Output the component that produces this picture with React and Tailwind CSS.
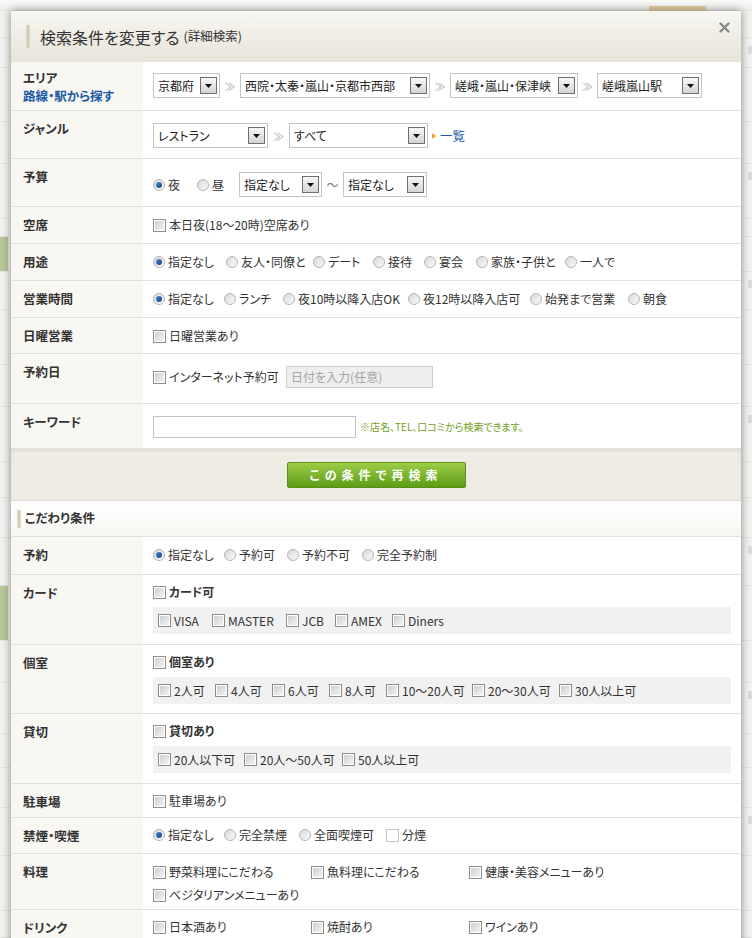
import React from "react";

const FONT = "font-[family-name:'Noto_Sans_CJK_JP','Noto_Sans',sans-serif] [font-feature-settings:'palt']";

function Radio({ on }) {
  return (
    <span className="flex h-[12px] w-[12px] shrink-0 items-center justify-center rounded-full border border-[#b4b4b4] bg-gradient-to-br from-[#d9d9d9] to-[#fbfbfb]">
      {on && <span className="h-[6px] w-[6px] rounded-full bg-gradient-to-br from-[#4f8fd6] to-[#0f3f7e]" />}
    </span>
  );
}

function Cb({ light }) {
  return light ? (
    <span className="h-[13px] w-[13px] shrink-0 border border-[#c4c4c4] bg-white" />
  ) : (
    <span className="flex h-[13px] w-[13px] shrink-0 items-center justify-center border border-[#8d8d8d] bg-white">
      <span className="h-[9px] w-[9px] bg-gradient-to-br from-[#cfcfcf] to-[#f4f4f4]" />
    </span>
  );
}

function RadioItem({ on, w, children }) {
  return (
    <span className={`flex shrink-0 items-center ${w || ""}`}>
      <Radio on={on} />
      <span className="ml-[3px] whitespace-nowrap">{children}</span>
    </span>
  );
}

function CbItem({ w, bold, light, children }) {
  return (
    <span className={`flex shrink-0 items-center ${w || ""}`}>
      <Cb light={light} />
      <span className={`ml-[3px] whitespace-nowrap ${bold ? "font-bold" : ""}`}>{children}</span>
    </span>
  );
}

function Select({ w, children }) {
  return (
    <div className={`flex h-[25px] shrink-0 items-center justify-between border border-[#c4c4c4] bg-white pl-[4px] pr-[2px] text-[12px] text-[#222] ${w}`}>
      <span className="whitespace-nowrap leading-none">{children}</span>
      <span className="flex h-[17px] w-[17px] shrink-0 items-center justify-center border border-[#6f6f6f] bg-gradient-to-b from-[#f7f7f7] to-[#d4d4d4]">
        <svg width="7" height="4" viewBox="0 0 7 4">
          <path d="M0 0h7L3.5 4z" fill="#111" />
        </svg>
      </span>
    </div>
  );
}

function Sep({ w }) {
  return <span className={`shrink-0 text-center text-[11px] text-[#a8a8a8] ${w || "w-[20px]"}`}>≫</span>;
}

function Row({ label, children, cls, lcls }) {
  return (
    <div className="flex border-b border-[#e4e1d5]">
      <div className={`w-[132px] shrink-0 bg-[#f8f7f2] pl-[12px] text-[12.5px] font-bold leading-[16px] text-[#333] ${lcls || "pt-[10px]"}`}>
        {label}
      </div>
      <div className={`min-w-0 flex-1 pl-[10px] pr-[10px] leading-[18px] ${cls}`}>{children}</div>
    </div>
  );
}

function Background() {
  const rows = [30, 32, 60, 46, 60, 20, 38, 42, 60, 46, 60, 40, 44, 52, 60, 46, 56, 38, 44, 52, 60, 30];
  return (
    <div className="flex h-full w-full flex-col">
      <div className="flex h-[11px] border-b border-[#e3e3e0] bg-gradient-to-b from-[#fbfbfa] to-[#efefed]">
        <div className="ml-[649px] mt-[6px] h-[5px] w-[57px] bg-[#e6cf9f]" />
      </div>
      {rows.map((h, i) => (
        <div key={i} className="flex justify-between border-b border-[#e4e4e1]" style={{ height: h }}>
          <div className={`w-[8px] ${i === 6 || i === 14 ? "bg-[#b9c897]" : ""}`} />
          <div className={`mt-[8px] h-[8px] w-[4px] ${i % 3 === 1 ? "bg-[#dcdcda]" : ""}`} />
        </div>
      ))}
    </div>
  );
}

export default function App() {
  return (
    <div className={`relative h-[938px] w-[752px] overflow-hidden bg-[#f3f3f1] text-[12px] text-[#333] ${FONT}`}>
      <Background />
      <div className="absolute left-[11px] top-[11px] w-[730px] bg-white shadow-[0_0_9px_rgba(0,0,0,0.45)]">
        {/* header */}
        <div className="flex h-[51px] items-center bg-gradient-to-b from-[#f7f6f1] to-[#e7e4d9]">
          <span className="ml-[15px] h-[23px] w-[4px] bg-gradient-to-r from-[#e2dccb] via-[#cfc7b0] to-[#e2dccb]" />
          <span className="ml-[10px] text-[16px] leading-none text-[#333]">検索条件を変更する</span>
          <span className="ml-[4px] text-[12.5px] leading-none text-[#333]">(詳細検索)</span>
          <span className="ml-auto mr-[11px] self-start pt-[11px]">
            <svg width="11" height="11" viewBox="0 0 11 11">
              <path d="M1.5 1.5l8 8M9.5 1.5l-8 8" stroke="#8a8a8a" strokeWidth="2.4" strokeLinecap="round" />
            </svg>
          </span>
        </div>

        <Row
          lcls="pt-[7px]"
          label={
            <div className="flex flex-col">
              <span className="leading-[18px]">エリア</span>
              <span className="leading-[18px] text-[#1b5aa6]">路線・駅から探す</span>
            </div>
          }
          cls="flex items-center pt-[11px] pb-[12px]"
        >
          <Select w="w-[67px]">京都府</Select>
          <Sep />
          <Select w="w-[190px]">西院・太秦・嵐山・京都市西部</Select>
          <Sep />
          <Select w="w-[128px]">嵯峨・嵐山・保津峡</Select>
          <Sep w="w-[19px]" />
          <Select w="w-[105px]">嵯峨嵐山駅</Select>
        </Row>

        <Row label="ジャンル" cls="flex items-center pt-[12px] pb-[10px]">
          <Select w="w-[115px]">レストラン</Select>
          <Sep w="w-[21px]" />
          <Select w="w-[139px]">すべて</Select>
          <span className="ml-[4px] flex items-center">
            <svg width="4" height="6" viewBox="0 0 4 6">
              <path d="M0 0l4 3-4 3z" fill="#eea13a" />
            </svg>
            <span className="ml-[4px] text-[12.5px] text-[#1b5aa6]">一覧</span>
          </span>
        </Row>

        <Row label="予算" cls="flex items-center pt-[13px] pb-[9px]">
          <RadioItem on w="w-[44px]">夜</RadioItem>
          <RadioItem w="w-[42px]">昼</RadioItem>
          <Select w="w-[83px]">指定なし</Select>
          <span className="w-[21px] shrink-0 text-center text-[#777]">～</span>
          <Select w="w-[84px]">指定なし</Select>
        </Row>

        <Row label="空席" cls="flex items-center py-[9px]">
          <CbItem>本日夜(18～20時)空席あり</CbItem>
        </Row>

        <Row label="用途" cls="flex items-center py-[9px]">
          <RadioItem on w="w-[73px]">指定なし</RadioItem>
          <RadioItem w="w-[87px]">友人・同僚と</RadioItem>
          <RadioItem w="w-[60px]">デート</RadioItem>
          <RadioItem w="w-[51px]">接待</RadioItem>
          <RadioItem w="w-[52px]">宴会</RadioItem>
          <RadioItem w="w-[89px]">家族・子供と</RadioItem>
          <RadioItem>一人で</RadioItem>
        </Row>

        <Row label="営業時間" cls="flex items-center py-[9px]">
          <RadioItem on w="w-[71px]">指定なし</RadioItem>
          <RadioItem w="w-[59px]">ランチ</RadioItem>
          <RadioItem w="w-[125px]">夜10時以降入店OK</RadioItem>
          <RadioItem w="w-[122px]">夜12時以降入店可</RadioItem>
          <RadioItem w="w-[98px]">始発まで営業</RadioItem>
          <RadioItem>朝食</RadioItem>
        </Row>

        <Row label="日曜営業" cls="flex items-center pt-[9px] pb-[8px]">
          <CbItem>日曜営業あり</CbItem>
        </Row>

        <Row label="予約日" cls="flex items-center pt-[12px] pb-[15px]">
          <CbItem w="w-[133px]">インターネット予約可</CbItem>
          <div className="flex h-[22px] w-[147px] items-center border border-[#cdcdcd] bg-[#eeeeee] pl-[4px] text-[#a5a5a5]">
            日付を入力(任意)
          </div>
        </Row>

        <Row label="キーワード" cls="flex items-center pt-[12px] pb-[10px]">
          <div className="h-[22px] w-[203px] shrink-0 border border-[#c2c2c2] bg-white" />
          <span className="ml-[4px] whitespace-nowrap text-[10px] text-[#6f9f22]">※店名、TEL、口コミから検索できます。</span>
        </Row>

        {/* button area */}
        <div className="flex h-[52px] justify-center border-b border-[#e0ddd1] bg-[#eeece5] pt-[13px] shadow-[inset_0_2px_3px_rgba(0,0,0,0.07)]">
          <div className="flex h-[26px] w-[179px] items-center justify-center rounded-[2px] border border-[#5a8f1c] bg-gradient-to-b from-[#9ccd45] to-[#5e9d14] text-[12px] font-bold tracking-[5px] text-white">
            この条件で再検索
          </div>
        </div>

        {/* kodawari header */}
        <div className="flex h-[36px] items-center border-b border-[#e4e1d5] bg-gradient-to-b from-white to-[#f7f6f2]">
          <span className="ml-[6px] h-[18px] w-[4px] bg-gradient-to-r from-[#e6e0cf] via-[#cfc7b0] to-[#e6e0cf]" />
          <span className="ml-[4px] text-[12.5px] font-bold">こだわり条件</span>
        </div>

        <Row label="予約" cls="flex items-center pt-[9px] pb-[10px]">
          <RadioItem on w="w-[71px]">指定なし</RadioItem>
          <RadioItem w="w-[63px]">予約可</RadioItem>
          <RadioItem w="w-[75px]">予約不可</RadioItem>
          <RadioItem>完全予約制</RadioItem>
        </Row>

        <Row label="カード" cls="pt-[8px] pb-[10px]">
          <div className="flex h-[18px] items-center">
            <CbItem bold>カード可</CbItem>
          </div>
          <div className="mt-[6px] flex h-[27px] items-center bg-[#f1f1f1] pl-[5px]">
            <CbItem w="w-[54px]">VISA</CbItem>
            <CbItem w="w-[74px]">MASTER</CbItem>
            <CbItem w="w-[49px]">JCB</CbItem>
            <CbItem w="w-[57px]">AMEX</CbItem>
            <CbItem>Diners</CbItem>
          </div>
        </Row>

        <Row label="個室" cls="pt-[8px] pb-[9px]">
          <div className="flex h-[18px] items-center">
            <CbItem bold>個室あり</CbItem>
          </div>
          <div className="mt-[6px] flex h-[27px] items-center bg-[#f1f1f1] pl-[5px]">
            <CbItem w="w-[57px]">2人可</CbItem>
            <CbItem w="w-[57px]">4人可</CbItem>
            <CbItem w="w-[57px]">6人可</CbItem>
            <CbItem w="w-[57px]">8人可</CbItem>
            <CbItem w="w-[86px]">10～20人可</CbItem>
            <CbItem w="w-[87px]">20～30人可</CbItem>
            <CbItem>30人以上可</CbItem>
          </div>
        </Row>

        <Row label="貸切" cls="pt-[8px] pb-[10px]">
          <div className="flex h-[18px] items-center">
            <CbItem bold>貸切あり</CbItem>
          </div>
          <div className="mt-[6px] flex h-[27px] items-center bg-[#f1f1f1] pl-[5px]">
            <CbItem w="w-[86px]">20人以下可</CbItem>
            <CbItem w="w-[98px]">20人～50人可</CbItem>
            <CbItem>50人以上可</CbItem>
          </div>
        </Row>

        <Row label="駐車場" cls="flex items-center pt-[8px] pb-[7px]">
          <CbItem>駐車場あり</CbItem>
        </Row>

        <Row label="禁煙・喫煙" cls="flex items-center pt-[8px] pb-[9px]">
          <RadioItem on w="w-[71px]">指定なし</RadioItem>
          <RadioItem w="w-[75px]">完全禁煙</RadioItem>
          <RadioItem w="w-[87px]">全面喫煙可</RadioItem>
          <CbItem light>分煙</CbItem>
        </Row>

        <Row label="料理" cls="pt-[9px] pb-[5px]">
          <div className="flex h-[18px] items-center">
            <CbItem w="w-[158px]">野菜料理にこだわる</CbItem>
            <CbItem w="w-[158px]">魚料理にこだわる</CbItem>
            <CbItem>健康・美容メニューあり</CbItem>
          </div>
          <div className="mt-[5px] flex h-[18px] items-center">
            <CbItem>ベジタリアンメニューあり</CbItem>
          </div>
        </Row>

        <Row label="ドリンク" cls="pt-[8px] pb-[10px]">
          <div className="flex h-[18px] items-center">
            <CbItem w="w-[158px]">日本酒あり</CbItem>
            <CbItem w="w-[158px]">焼酎あり</CbItem>
            <CbItem>ワインあり</CbItem>
          </div>
        </Row>
      </div>
    </div>
  );
}
